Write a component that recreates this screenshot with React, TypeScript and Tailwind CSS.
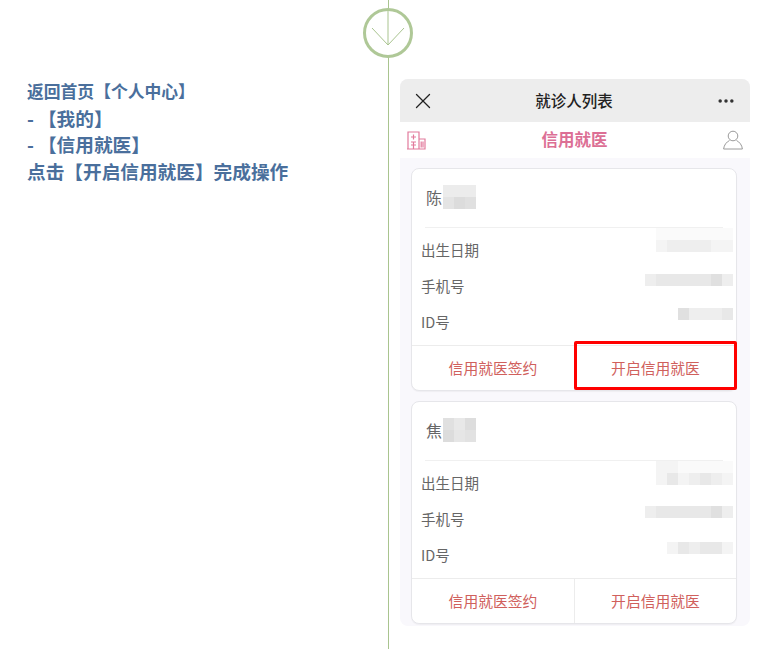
import React from "react";
import { X, Ellipsis } from "lucide-react";

const cjk = "font-['Noto_Sans_CJK_SC','Liberation_Sans',sans-serif]";

// 打码的小方块,一行一行画
const Mosaic: React.FC<{ cells: string[] }> = ({ cells }) => (
  <div className="flex blur-[0.7px]">
    {cells.map((c, i) => (
      <div key={i} className={`w-[11px] h-[12px] ${c}`} />
    ))}
  </div>
);

const g0 = "bg-[#fafafa]";
const g1 = "bg-[#f4f4f4]";
const g2 = "bg-[#eeeeee]";
const g3 = "bg-[#e8e8e8]";
const g4 = "bg-[#e0e0e0]";

interface Patient {
  name: string;
  birth: string[];
  birthTop: string[];
  phone: string[];
  idNo: string[];
  nameTop: string[];
  nameBottom: string[];
  shifts: string[];
  highlight?: boolean;
}

const patients: Patient[] = [
  {
    name: "陈",
    nameTop: ["bg-[#ececec]", "bg-[#ececec]", "bg-[#ececec]"],
    nameBottom: ["bg-[#e4e4e4]", "bg-[#dcdcdc]", "bg-[#e0e0e0]"],
    birthTop: [g0, g0, g0, g0, g0, g0, g0],
    birth: [g1, g2, g2, g2, g2, g1, g1],
    phone: [g2, g3, g3, g3, g3, g3, g4, g2],
    idNo: [g4, g2, g2, g2, g3],
    shifts: ["mb-[8px]", "mb-[12px]", "mb-[16px]"],
    highlight: true,
  },
  {
    name: "焦",
    nameTop: ["bg-[#e0e0e0]", "bg-[#e8e8e8]", "bg-[#dddddd]"],
    nameBottom: ["bg-[#dcdcdc]", "bg-[#e6e6e6]", "bg-[#e2e2e2]"],
    birthTop: [g1, g1, g0, g0, g0, g0, g0],
    birth: [g1, g3, g1, g2, g3, g2, g1],
    phone: [g2, g3, g3, g3, g3, g3, g4, g2],
    idNo: [g1, g3, g2, g3, g3, g1],
    shifts: ["mb-[8px]", "mb-[14px]", "mb-[14px]"],
  },
];

const InfoRow: React.FC<{ label: string; shift: string; children: React.ReactNode }> = ({ label, shift, children }) => (
  <div className="h-[36px] flex items-center justify-between pl-[9px] pr-[3px]">
    <span className="text-[14.5px] text-[#666666]">{label}</span>
    <div className={`flex flex-col ${shift}`}>{children}</div>
  </div>
);

const PatientCard: React.FC<{ p: Patient }> = ({ p }) => (
  <div className="relative bg-white rounded-[8px] border border-[#e6e6ea] shadow-[0_1px_1px_rgba(0,0,0,0.04)]">
    <div className="mx-[13px] h-[59px] flex items-center border-b border-[#f0f0f0]">
      <span className="text-[16px] text-[#666666] ml-[1px] w-[17px] mt-[-2px]">{p.name}</span>
      <div className="flex flex-col mt-[-2px]">
        <Mosaic cells={p.nameTop} />
        <Mosaic cells={p.nameBottom} />
      </div>
    </div>
    <div className="pt-[4px] pb-[5px]">
      <InfoRow label="出生日期" shift={p.shifts[0]}>
        <div className="h-0 relative">
          <div className="absolute bottom-0 right-0">
            <Mosaic cells={p.birthTop} />
          </div>
        </div>
        <Mosaic cells={p.birth} />
      </InfoRow>
      <InfoRow label="手机号" shift={p.shifts[1]}>
        <Mosaic cells={p.phone} />
      </InfoRow>
      <InfoRow label="ID号" shift={p.shifts[2]}>
        <Mosaic cells={p.idNo} />
      </InfoRow>
    </div>
    <div className="h-[45px] flex border-t border-[#ececec] text-[14.8px] text-[#d0605c]">
      <div className="w-[163px] flex items-center justify-center border-r border-[#ececec]">信用就医签约</div>
      <div className="flex-1 flex items-center justify-center">开启信用就医</div>
    </div>
    {p.highlight && (
      <div className="absolute left-[162px] right-[-1px] bottom-0 h-[49px] border-[3px] border-[#ff0000] rounded-[2px]" />
    )}
  </div>
);

export default function App() {
  return (
    <div className={`w-[769px] h-[655px] bg-white flex overflow-hidden ${cjk}`}>
      {/* 左边的文字 */}
      <div className="w-[388px] pl-[27px] pt-[78px] text-[18.67px] leading-[26.6px] font-bold text-[#4a6f9c]">
        <p className="text-[16.8px]">返回首页【个人中心】</p>
        <p><span className="mr-[4px]">-</span>【我的】</p>
        <p><span className="mr-[4px]">-</span>【信用就医】</p>
        <p>点击【开启信用就医】完成操作</p>
      </div>

      {/* 中间的时间线 */}
      <div className="relative w-[12px] h-[649px]">
        <div className="w-[1px] h-full bg-[#a9c48f]" />
        <div className="absolute left-[-25px] top-[8px] w-[50px] h-[50px] rounded-full bg-white border-[3px] border-[#afc897]">
          <svg viewBox="0 0 44 44" className="w-full h-full" fill="none" stroke="#a9c48f" strokeWidth="1">
            <path d="M22 0V34" />
            <path d="M6 17L22 34L38 17" />
          </svg>
        </div>
      </div>

      {/* 手机截图 */}
      <div className="w-[350px] h-[547px] mt-[79px] flex flex-col bg-[#f9f8fc] rounded-[8px] overflow-hidden">
        <div className="h-[43px] shrink-0 bg-[#ededed] flex items-center justify-between pl-[10px] pr-[14px]">
          <X size={26} strokeWidth={1.2} className="text-[#222222]" />
          <span className="text-[15.5px] font-medium text-[#222222] ml-[-4px]">就诊人列表</span>
          <Ellipsis size={20} strokeWidth={2.2} className="text-[#333333]" />
        </div>
        <div className="h-[36px] shrink-0 bg-white flex items-center justify-between pl-[6px] pr-[7px]">
          <svg viewBox="0 0 20 20" className="w-[20px] h-[20px]" fill="none" stroke="#e27a9c" strokeWidth="1.2">
            <path d="M2 19V2H13V19ZM13 9H19V19H13ZM1 19H19.5" />
            <path d="M7.5 4.5V9.5M5 7H10M5 12H10M5 15H10M7.5 12V19M15.2 11.5V17.5M17 11.5V17.5" />
          </svg>
          <span className="text-[16.5px] font-bold text-[#dc6f95] mt-[-2px]">信用就医</span>
          <svg viewBox="0 0 20 20" className="w-[20px] h-[20px]" fill="none" stroke="#9a9a9a" strokeWidth="1">
            <circle cx="10" cy="6" r="4.8" />
            <path d="M6.5 10.5C3.5 12 1 15 0.6 19H19.4C19 15 16.5 12 13.5 10.5" />
          </svg>
        </div>
        <div className="flex-1 pl-[11px] pr-[13px] pt-[10px] flex flex-col gap-[10px]">
          {patients.map((p) => (
            <PatientCard key={p.name} p={p} />
          ))}
        </div>
      </div>
    </div>
  );
}
